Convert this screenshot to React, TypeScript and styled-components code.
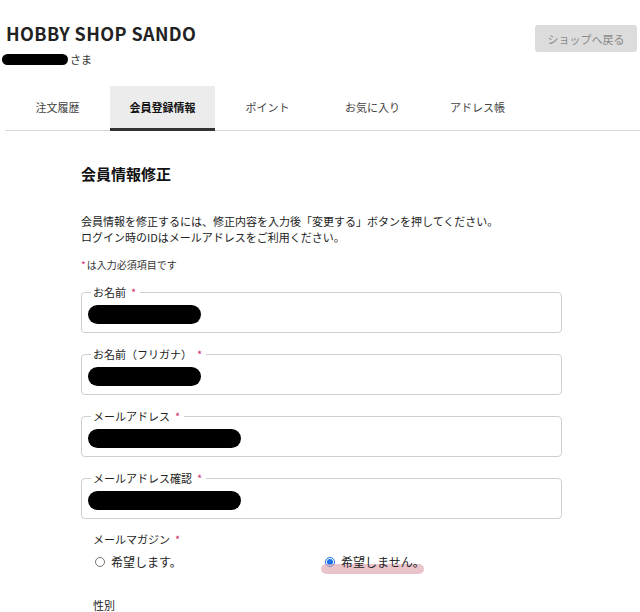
import React from "react";
import styled, { createGlobalStyle } from "styled-components";

const GlobalStyle = createGlobalStyle`
  html, body {
    margin: 0;
    padding: 0;
    background: #fff;
  }
  body {
    font-family: "Noto Sans CJK JP", "Noto Sans", sans-serif;
    color: #222;
    overflow: hidden;
  }
`;

const Page = styled.div`
  width: 640px;
  height: 612px;
  overflow: hidden;
`;

const Header = styled.header`
  display: flex;
  justify-content: space-between;
  align-items: flex-start;
  padding: 22px 3px 0 6px;
`;

const Brand = styled.div`
  display: flex;
  flex-direction: column;
`;

const Title = styled.h1`
  margin: 0;
  font-size: 18px;
  line-height: 22px;
  font-weight: bold;
  color: #222;
  letter-spacing: 0.4px;
`;

const Customer = styled.div`
  display: flex;
  align-items: center;
  gap: 2px;
  margin: 7px 0 0 -4px;
  font-size: 11px;
  color: #333;
`;

const Redacted = styled.span<{ $w: number; $h: number }>`
  display: inline-block;
  width: ${({ $w }) => $w}px;
  height: ${({ $h }) => $h}px;
  border-radius: ${({ $h }) => $h / 2}px;
  background: #000;
`;

const BackButton = styled.button`
  width: 102px;
  height: 27px;
  margin-top: 3px;
  border: none;
  border-radius: 3px;
  background: #dcdcdc;
  color: #8a8a8a;
  font-family: inherit;
  font-size: 11px;
`;

const Tabs = styled.nav`
  display: flex;
  margin: 19px 0 0 5px;
  border-bottom: 1px solid #d6d6d6;
`;

const Tab = styled.div<{ $active?: boolean }>`
  width: 105px;
  height: 45px;
  box-sizing: border-box;
  display: flex;
  align-items: center;
  justify-content: center;
  font-size: 11px;
  color: ${({ $active }) => ($active ? "#111" : "#444")};
  font-weight: ${({ $active }) => ($active ? "bold" : "normal")};
  background: ${({ $active }) => ($active ? "#ececec" : "transparent")};
  border-bottom: 3px solid ${({ $active }) => ($active ? "#333" : "transparent")};
  margin-bottom: -1px;
`;

const Main = styled.main`
  width: 481px;
  margin-left: 81px;
`;

const SectionTitle = styled.h2`
  margin: 32px 0 0;
  font-size: 15px;
  line-height: 22px;
  font-weight: bold;
  color: #111;
`;

const Lead = styled.p`
  margin: 28px 0 0;
  font-size: 11px;
  line-height: 16px;
  color: #222;
`;

const Note = styled.p`
  margin: 13px 0 0;
  font-size: 10px;
  line-height: 14px;
  color: #333;
`;

const Required = styled.span`
  color: #d0306e;
  margin: 0 2px 0 5px;
`;

const Field = styled.fieldset`
  margin: 13px 0 0;
  padding: 0 6px 2px;
  border: 1px solid #cfcfcf;
  border-radius: 4px;
  height: 48px;
  box-sizing: border-box;
  display: flex;
  align-items: center;
  & + & {
    margin-top: 14px;
  }
`;

const Legend = styled.legend`
  padding: 0 2px;
  margin-left: 3px;
  font-size: 11px;
  line-height: 14px;
  color: #222;
`;

const Group = styled.div`
  margin-top: 13px;
  padding-left: 12px;
`;

const GroupLabel = styled.div`
  font-size: 11px;
  line-height: 14px;
  color: #222;
`;

const Radios = styled.div`
  display: grid;
  grid-template-columns: 230px 1fr;
  margin-top: 8px;
  margin-left: -2px;
`;

const RadioLabel = styled.label`
  position: relative;
  display: flex;
  align-items: center;
  gap: 3px;
  font-size: 12px;
  line-height: 16px;
  color: #222;
`;

const RadioInput = styled.input`
  width: 10px;
  height: 10px;
  margin: 0 3px 0 4px;
  accent-color: #1a73e8;
`;

const Marker = styled.span`
  position: absolute;
  left: 0;
  top: 10px;
  width: 103px;
  height: 10px;
  border-radius: 5px;
  background: rgba(215, 150, 160, 0.55);
`;

const RadioText = styled.span`
  position: relative;
`;

const Gender = styled.div`
  margin-top: 28px;
  padding-left: 12px;
  font-size: 11px;
  line-height: 14px;
  color: #222;
`;

const tabs = ["注文履歴", "会員登録情報", "ポイント", "お気に入り", "アドレス帳"];

const fields = [
  { label: "お名前", w: 113 },
  { label: "お名前（フリガナ）", w: 113 },
  { label: "メールアドレス", w: 153 },
  { label: "メールアドレス確認", w: 153 },
];

export default function App() {
  return (
    <Page>
      <GlobalStyle />
      <Header>
        <Brand>
          <Title>HOBBY SHOP SANDO</Title>
          <Customer>
            <Redacted $w={66} $h={11} />
            さま
          </Customer>
        </Brand>
        <BackButton>ショップへ戻る</BackButton>
      </Header>
      <Tabs>
        {tabs.map((t, i) => (
          <Tab key={t} $active={i === 1}>
            {t}
          </Tab>
        ))}
      </Tabs>
      <Main>
        <SectionTitle>会員情報修正</SectionTitle>
        <Lead>
          会員情報を修正するには、修正内容を入力後「変更する」ボタンを押してください。
          <br />
          ログイン時のIDはメールアドレスをご利用ください。
        </Lead>
        <Note>
          <Required style={{ margin: "0 1px 0 0" }}>*</Required>は入力必須項目です
        </Note>
        {fields.map((f) => (
          <Field key={f.label}>
            <Legend>
              {f.label}
              <Required>*</Required>
            </Legend>
            <Redacted $w={f.w} $h={19} />
          </Field>
        ))}
        <Group>
          <GroupLabel>
            メールマガジン<Required>*</Required>
          </GroupLabel>
          <Radios>
            <RadioLabel>
              <RadioInput type="radio" name="mag" />
              <RadioText>希望します。</RadioText>
            </RadioLabel>
            <RadioLabel>
              <Marker />
              <RadioInput type="radio" name="mag" defaultChecked />
              <RadioText>希望しません。</RadioText>
            </RadioLabel>
          </Radios>
        </Group>
        <Gender>性別</Gender>
      </Main>
    </Page>
  );
}
